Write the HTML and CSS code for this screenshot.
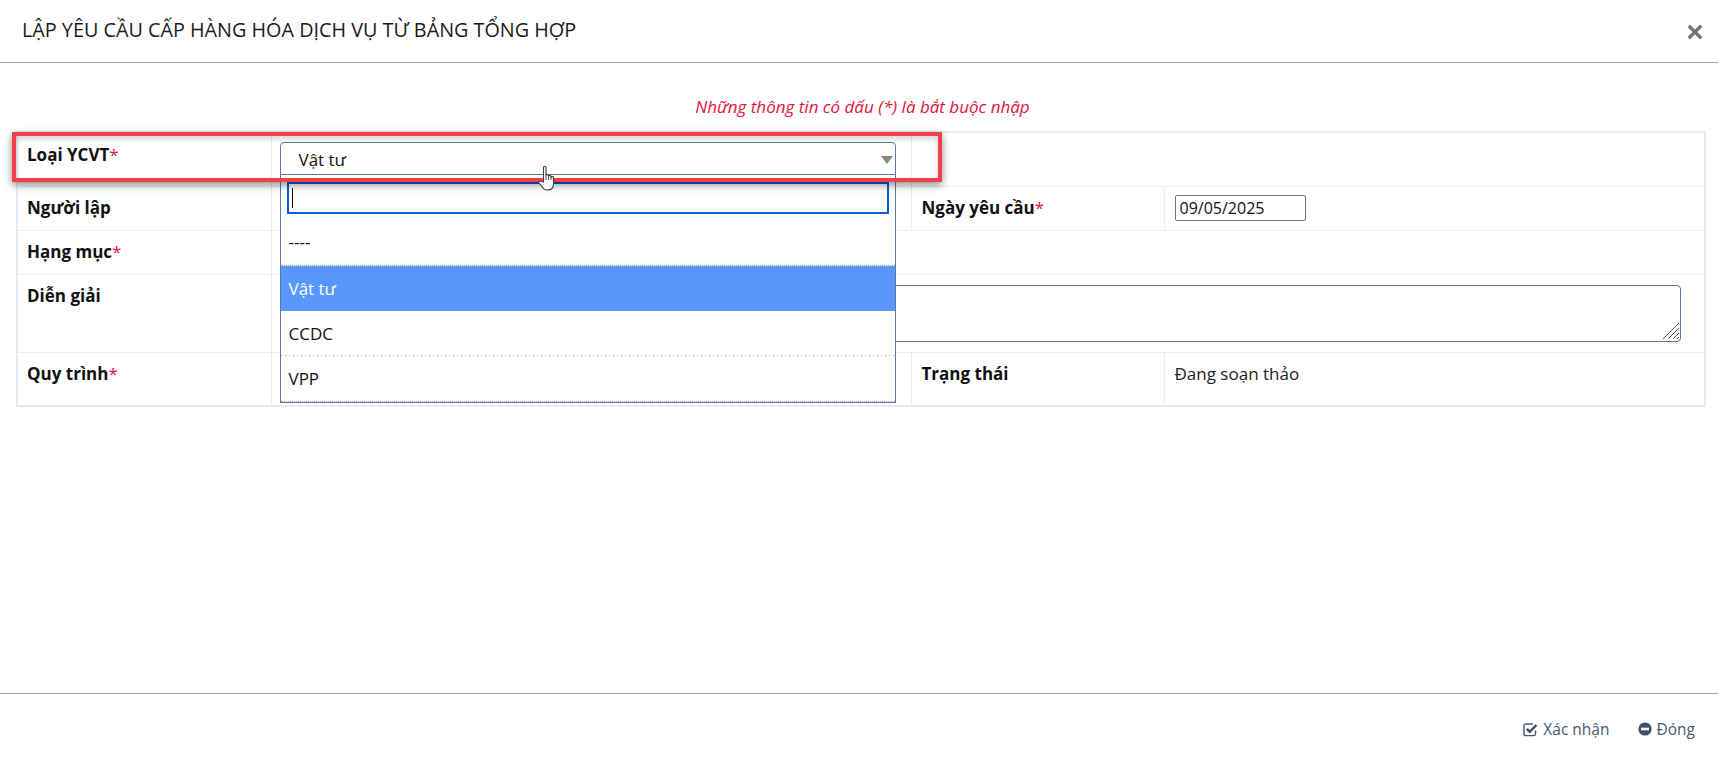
FILE: index.html
```html
<!DOCTYPE html>
<html lang="vi">
<head>
<meta charset="utf-8">
<title>Lập yêu cầu</title>
<link rel="stylesheet" href="styles.css">
</head>
<body>
<div class="modal">
  <header class="modal-header">
    <h1 class="modal-title">LẬP YÊU CẦU CẤP HÀNG HÓA DỊCH VỤ TỪ BẢNG TỔNG HỢP</h1>
    <svg class="close" width="16" height="16" viewBox="0 0 16 16"><path d="M1.8 1.8 14.2 14.2M14.2 1.8 1.8 14.2" stroke="#777" stroke-width="3.4" fill="none"/></svg>
  </header>
  <main class="modal-body">
    <p class="notice">Những thông tin có dấu (*) là bắt buộc nhập</p>
    <table class="form-table">
      <colgroup><col class="c1"><col class="c2"><col class="c3"><col class="c4"></colgroup>
      <tr class="r1">
        <th>Loại YCVT<span class="req">*</span></th>
        <td class="anchor">
          <div class="select">
            <span>Vật tư</span>
            <i class="arrow"></i>
          </div>
          <div class="dropdown">
            <div class="search"><span class="caret"></span></div>
            <ul class="options">
              <li class="blank">----</li>
              <li class="active">Vật tư</li>
              <li class="sparse">CCDC</li>
              <li class="last">VPP</li>
            </ul>
          </div>
        </td>
        <td colspan="2"></td>
      </tr>
      <tr class="r2">
        <th>Người lập</th>
        <td></td>
        <th class="right-col">Ngày yêu cầu<span class="req">*</span></th>
        <td class="right-col"><input class="date" type="text" value="09/05/2025"></td>
      </tr>
      <tr class="r3">
        <th>Hạng mục<span class="req">*</span></th>
        <td colspan="3"></td>
      </tr>
      <tr class="r4">
        <th>Diễn giải</th>
        <td colspan="3" class="note-cell">
          <div class="note-wrap">
            <textarea class="note"></textarea>
            <svg class="grip" width="18" height="18" viewBox="0 0 18 18"><path d="M1 17 17 1M6 17 17 6M11 17 17 11M15 17 17 15" stroke="#555" stroke-width="1" fill="none"/></svg>
          </div>
        </td>
      </tr>
      <tr class="r5">
        <th>Quy trình<span class="req">*</span></th>
        <td></td>
        <th class="right-col">Trạng thái</th>
        <td class="right-col">Đang soạn thảo</td>
      </tr>
    </table>
    <div class="highlight"></div>
    <svg class="hand" width="20" height="26" viewBox="0 0 20 26">
      <path d="M5.5 17V2.5C5.5 .8 8 .8 8 2.5V10.5C8 9 10.5 9 10.5 10.5V11.5C10.5 10 13 10 13 11.5V12.5C13 11 15.5 11 15.5 12.5V19C15.5 23 13 25 9.5 25 6.5 25 5 23.5 4 21.5L1 18C.2 16.5 2 15.5 3.2 16.5Z" fill="#fff" stroke="#3a3f4a" stroke-width="1.1" stroke-linejoin="round"/>
      <path d="M8 10.5V15M10.5 11V15M13 12V15" stroke="#3a3f4a" stroke-width=".9" fill="none"/>
    </svg>
  </main>
  <footer class="modal-footer">
    <a class="action">
      <svg width="15" height="15" viewBox="0 0 15 15"><path d="M12.5 8.5V12a1.6 1.6 0 0 1-1.6 1.6H2.6A1.6 1.6 0 0 1 1 12V3.6A1.6 1.6 0 0 1 2.6 2H10" fill="none" stroke="#4a5874" stroke-width="1.4"/><path d="M3.8 6.8 6.8 9.8 13.4 3" fill="none" stroke="#3d4a66" stroke-width="2.4"/></svg>
      Xác nhận
    </a>
    <a class="action">
      <svg width="14" height="14" viewBox="0 0 14 14"><circle cx="7" cy="7" r="6.6" fill="#3f4e6d"/><rect x="3" y="5.7" width="8" height="2.6" fill="#fff"/></svg>
      Đóng
    </a>
  </footer>
</div>
</body>
</html>
```
FILE: styles.css
```css
* { box-sizing: border-box; }
html, body { margin: 0; height: 100%; background: #fff; }
body { font-family: "Open Sans", "Noto Sans", sans-serif; font-size: 17px; color: #111; overflow: hidden; }
.modal { display: flex; flex-direction: column; height: 764px; }
.modal-header { height: 63px; flex: none; display: flex; align-items: center; justify-content: space-between; padding: 0 15px 3px 22px; border-bottom: 1px solid #9aa9bf; }
.modal-title { margin: 0; font-size: 19.8px; font-weight: 400; color: #1a1a1a; }
.close { margin-top: 5px; }
.modal-body { flex: 1; position: relative; padding: 0 12px 0 16px; }
.notice { margin: 0; height: 68px; padding: 32px 0 0 3px; text-align: center; font-style: italic; font-size: 17px; line-height: 24px; color: #e2123f; }
.form-table { width: 100%; table-layout: fixed; border-collapse: collapse; border: 2px solid #e3ebf4; }
.c1 { width: 254px; }
.c2 { width: 640px; }
.c3 { width: 253px; }
.form-table th, .form-table td { border: 1px solid #e6edf5; padding: 9px 9px 0; vertical-align: top; line-height: 24px; font-size: 17px; text-align: left; }
.form-table th { font-weight: 700; color: #111; }
.form-table td { color: #222; }
.form-table .r1 th { padding-top: 10px; }
.form-table .right-col { padding-left: 10px; }
.form-table .anchor { position: relative; padding-left: 8px; }
.r1 { height: 54px; }
.r2 { height: 44px; }
.r3 { height: 44px; }
.r4 { height: 78px; }
.r5 { height: 54px; }
.req { color: #e2123f; font-weight: 400; }
.select { position: relative; width: 616px; height: 33px; border: 1px solid #5b75ab; border-radius: 4px 4px 0 0; padding: 5px 18px 0; line-height: 24px; font-size: 17px; color: #111; }
.arrow { position: absolute; right: 2px; top: 13px; border-style: solid; border-width: 8px 6px 0; border-color: #888 transparent transparent; }
.dropdown { position: absolute; left: 8px; width: 616px; top: 42px; height: 228px; background: #fff; border: 1px solid #5b75ab; border-top-width: 0; z-index: 2; }
.search { margin: 7px 6px 0; height: 32px; border: 2px solid #0b5ed7; display: flex; align-items: center; padding-left: 3px; }
.caret { width: 1px; height: 20px; background: #111; }
.options { list-style: none; margin: 0; padding: 0; }
.options li { height: 45px; padding-left: 8px; line-height: 45px; font-size: 17px; color: #111; border-bottom: 1px dotted #aaa; }
.options .blank { height: 52px; line-height: 56px; }
.options .active { background: #5897fb; color: #fff; border-bottom-color: #5897fb; }
.options .sparse { border-bottom: 0; background: linear-gradient(90deg, #999 1px, transparent 1px) left bottom / 4px 1px repeat-x; }
.options .last { height: 46px; }
.date { display: block; width: 131px; height: 26px; margin-top: -1px; padding: 0 4px; border: 1px solid #777; border-radius: 2px; font: 16px/24px "Open Sans", sans-serif; color: #111; }
.note-cell.note-cell { padding-right: 23px; padding-top: 10px; }
.note-wrap { position: relative; }
.note { display: block; width: 100%; height: 57px; border: 1px solid #5b75ab; border-radius: 4px; resize: none; background: #fff; }
.grip { position: absolute; right: 1px; bottom: 2px; pointer-events: none; }
.highlight { position: absolute; left: 12px; top: 69px; width: 930px; height: 50px; border: 4px solid #f2404a; box-shadow: 0 3px 8px rgba(0,0,0,.45), inset 0 3px 6px rgba(0,0,0,.18); z-index: 3; pointer-events: none; }
.hand { position: absolute; left: 538px; top: 102px; z-index: 4; }
.modal-footer { height: 71px; flex: none; border-top: 1px solid #9aa4b2; display: flex; justify-content: flex-end; align-items: center; gap: 28px; padding: 0 23px 0 0; }
.action { display: inline-flex; align-items: center; gap: 5px; font-size: 15.5px; color: #4a5874; }
```
